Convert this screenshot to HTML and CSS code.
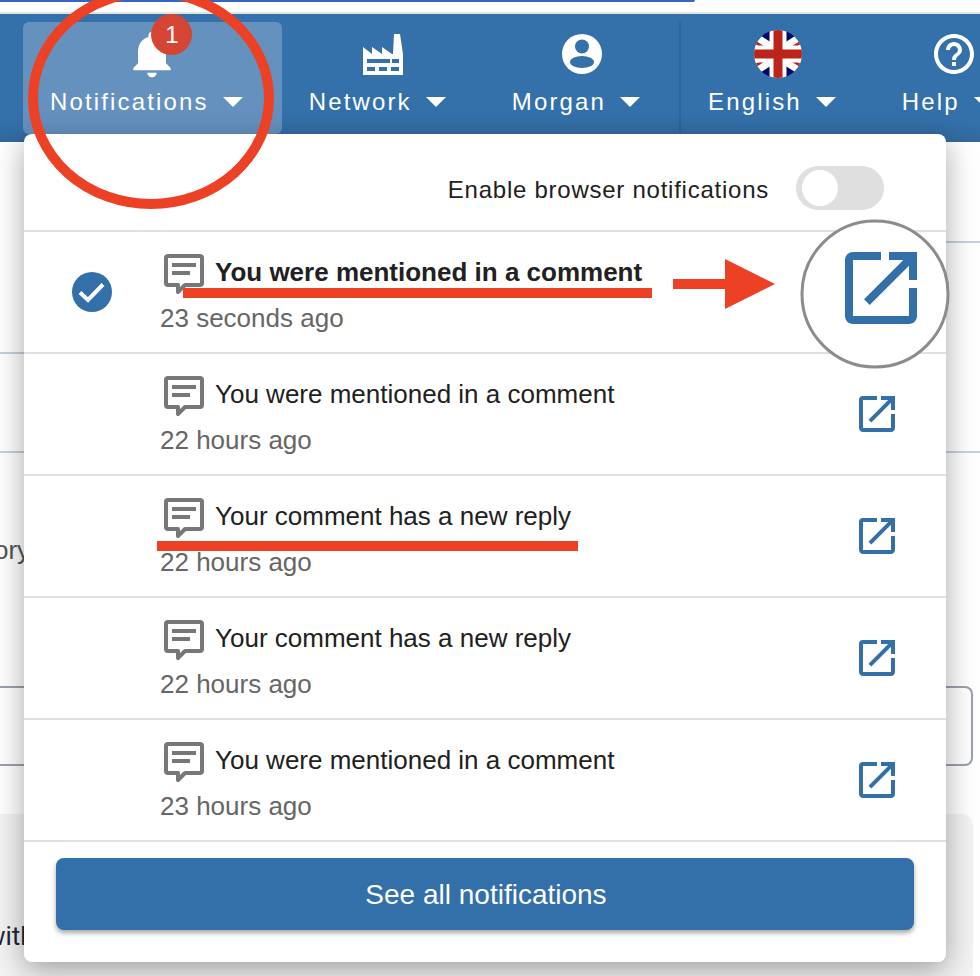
FILE: index.html
```html
<!DOCTYPE html>
<html lang="en">
<head>
    <meta charset="UTF-8">
    <meta name="viewport" content="width=device-width, initial-scale=1.0">
    <title>Notifications</title>
    <link rel="stylesheet" href="styles.css">
</head>
<body>
    <div class="top-strip"></div>

    <nav class="navbar">
        <div class="nav-item active">
            <span class="nav-icon">
                <svg width="56" height="56" viewBox="0 0 24 24"><path fill="#fff" d="M12 22c1.100 0 2-.9 2-2h-4c0 1.100.89 2 2 2zm6-6v-5c0-3.070-1.640-5.640-4.500-6.320V4c0-.83-.67-1.500-1.500-1.500s-1.500.67-1.500 1.500v.68C7.630 5.360 6 7.920 6 11v5l-2 2v1h16v-1l-2-2z"/></svg>
                <span class="badge">1</span>
            </span>
            <span class="nav-label">Notifications<i class="caret"></i></span>
        </div>
        <div class="nav-item">
            <span class="nav-icon">
                <svg width="40" height="41" viewBox="0 0 40 41"><path fill="#fff" fill-rule="evenodd" d="M0 13L9 20V13L19 20V13L29 20H30L31 0H37L40 20V41H0zM4 25V29H27V25zM29 25V29H36V25zM4 33V37H12V33zM16 33V37H24V33zM28 33V37H36V33z"/></svg>
            </span>
            <span class="nav-label">Network<i class="caret"></i></span>
        </div>
        <div class="nav-item">
            <span class="nav-icon">
                <svg width="48" height="48" viewBox="0 0 48 48">
                    <circle cx="24" cy="24" r="20" fill="#fff"/>
                    <circle cx="24" cy="16.500" r="7" fill="#3470aa"/>
                    <ellipse cx="24" cy="32" rx="12" ry="6" fill="#3470aa"/>
                </svg>
            </span>
            <span class="nav-label">Morgan<i class="caret"></i></span>
        </div>
        <div class="nav-divider"></div>
        <div class="nav-item">
            <span class="nav-icon">
                <svg width="48" height="48" viewBox="0 0 48 48">
                    <clipPath id="flag-clip"><circle cx="24" cy="24" r="24"/></clipPath>
                    <g clip-path="url(#flag-clip)">
                        <rect width="48" height="48" fill="#00096b"/>
                        <path d="M-4 6L52 42M-4 42L52 6" stroke="#fff" stroke-width="12"/>
                        <path d="M-4 9L20 24M52 39L28 24M-4 39L20 24M52 9L28 24" stroke="#bd2419" stroke-width="3"/>
                        <path d="M24 0V48M0 24H48" stroke="#fff" stroke-width="17"/>
                        <path d="M24 0V48M0 24H48" stroke="#bd2419" stroke-width="9"/>
                    </g>
                </svg>
            </span>
            <span class="nav-label">English<i class="caret"></i></span>
        </div>
        <div class="nav-item">
            <span class="nav-icon">
                <svg width="48" height="48" viewBox="0 0 24 24"><path fill="#fff" d="M11 18h2v-2h-2v2zm1-16C6.480 2 2 6.480 2 12s4.480 10 10 10 10-4.480 10-10S17.520 2 12 2zm0 18c-4.410 0-8-3.590-8-8s3.590-8 8-8 8 3.590 8 8-3.590 8-8 8zm0-14c-2.210 0-4 1.790-4 4h2c0-1.100.9-2 2-2s2 .9 2 2c0 2-3 1.750-3 5h2c0-2.250 3-2.500 3-5 0-2.210-1.790-4-4-4z"/></svg>
            </span>
            <span class="nav-label">Help<i class="caret"></i></span>
        </div>
    </nav>

    <!-- page behind the menu -->
    <main class="page">
        <div class="columns">
            <div class="col">
                <div class="block block-a"></div>
                <div class="block block-b"></div>
            </div>
            <div class="col">
                <div class="block block-c"></div>
                <div class="block block-d"></div>
            </div>
        </div>
        <p class="label-cut">ory</p>
        <div class="input-box"></div>
        <div class="info-panel"><p class="info-text">with</p></div>
    </main>

    <div class="menu">
        <div class="menu-head">
            <span class="switch-label">Enable browser notifications</span>
            <span class="switch"><span class="switch-knob"></span></span>
        </div>

        <div class="note unread">
            <span class="note-state">
                <svg width="40" height="40" viewBox="0 0 40 40"><circle cx="20" cy="20" r="20" fill="#336fa8"/><path d="M8 20.500l8 7.500L31 12.500" fill="none" stroke="#fff" stroke-width="4"/></svg>
            </span>
            <div class="note-body">
                <div class="note-title">
                    <svg class="chat" width="48" height="48" viewBox="0 0 48 48"><path class="chat-line" d="M8 6H40a2 2 0 0 1 2 2V33a2 2 0 0 1-2 2H25L18 42V35H8a2 2 0 0 1-2-2V8a2 2 0 0 1 2-2zM12 15H36M12 23H30"/></svg>
                    <span class="title-text">You were mentioned in a comment</span>
                </div>
                <div class="note-time">23 seconds ago</div>
            </div>
        </div>

        <div class="note">
            <span class="note-state"></span>
            <div class="note-body">
                <div class="note-title">
                    <svg class="chat" width="48" height="48" viewBox="0 0 48 48"><path class="chat-line" d="M8 6H40a2 2 0 0 1 2 2V33a2 2 0 0 1-2 2H25L18 42V35H8a2 2 0 0 1-2-2V8a2 2 0 0 1 2-2zM12 15H36M12 23H30"/></svg>
                    <span class="title-text">You were mentioned in a comment</span>
                </div>
                <div class="note-time">22 hours ago</div>
            </div>
            <svg class="open-link" width="48" height="48" viewBox="0 0 24 24"><path d="M19 19H5V5h7V3H5a2 2 0 0 0-2 2v14c0 1.100.9 2 2 2h14c1.100 0 2-.9 2-2v-7h-2v7zM14 3v2h3.590l-9.830 9.830 1.410 1.410L19 6.410V10h2V3h-7z"/></svg>
        </div>

        <div class="note">
            <span class="note-state"></span>
            <div class="note-body">
                <div class="note-title">
                    <svg class="chat" width="48" height="48" viewBox="0 0 48 48"><path class="chat-line" d="M8 6H40a2 2 0 0 1 2 2V33a2 2 0 0 1-2 2H25L18 42V35H8a2 2 0 0 1-2-2V8a2 2 0 0 1 2-2zM12 15H36M12 23H30"/></svg>
                    <span class="title-text">Your comment has a new reply</span>
                </div>
                <div class="note-time">22 hours ago</div>
            </div>
            <svg class="open-link" width="48" height="48" viewBox="0 0 24 24"><path d="M19 19H5V5h7V3H5a2 2 0 0 0-2 2v14c0 1.100.9 2 2 2h14c1.100 0 2-.9 2-2v-7h-2v7zM14 3v2h3.590l-9.830 9.830 1.410 1.410L19 6.410V10h2V3h-7z"/></svg>
        </div>

        <div class="note">
            <span class="note-state"></span>
            <div class="note-body">
                <div class="note-title">
                    <svg class="chat" width="48" height="48" viewBox="0 0 48 48"><path class="chat-line" d="M8 6H40a2 2 0 0 1 2 2V33a2 2 0 0 1-2 2H25L18 42V35H8a2 2 0 0 1-2-2V8a2 2 0 0 1 2-2zM12 15H36M12 23H30"/></svg>
                    <span class="title-text">Your comment has a new reply</span>
                </div>
                <div class="note-time">22 hours ago</div>
            </div>
            <svg class="open-link" width="48" height="48" viewBox="0 0 24 24"><path d="M19 19H5V5h7V3H5a2 2 0 0 0-2 2v14c0 1.100.9 2 2 2h14c1.100 0 2-.9 2-2v-7h-2v7zM14 3v2h3.590l-9.830 9.830 1.410 1.410L19 6.410V10h2V3h-7z"/></svg>
        </div>

        <div class="note">
            <span class="note-state"></span>
            <div class="note-body">
                <div class="note-title">
                    <svg class="chat" width="48" height="48" viewBox="0 0 48 48"><path class="chat-line" d="M8 6H40a2 2 0 0 1 2 2V33a2 2 0 0 1-2 2H25L18 42V35H8a2 2 0 0 1-2-2V8a2 2 0 0 1 2-2zM12 15H36M12 23H30"/></svg>
                    <span class="title-text">You were mentioned in a comment</span>
                </div>
                <div class="note-time">23 hours ago</div>
            </div>
            <svg class="open-link" width="48" height="48" viewBox="0 0 24 24"><path d="M19 19H5V5h7V3H5a2 2 0 0 0-2 2v14c0 1.100.9 2 2 2h14c1.100 0 2-.9 2-2v-7h-2v7zM14 3v2h3.590l-9.830 9.830 1.410 1.410L19 6.410V10h2V3h-7z"/></svg>
        </div>

        <div class="menu-foot">
            <button class="see-all">See all notifications</button>
        </div>
    </div>

    <!-- red marks and the magnifier drawn over the screenshot -->
    <svg class="marks" width="980" height="976" viewBox="0 0 980 976">
        <ellipse cx="151" cy="98" rx="118" ry="106" fill="none" stroke="#ec4124" stroke-width="10"/>
        <rect x="183" y="288" width="469" height="10" fill="#ec4124"/>
        <rect x="157" y="541" width="421" height="10" fill="#ec4124"/>
        <path d="M673 279H725V259L775 284L725 309V289H673z" fill="#ec4124"/>
        <circle cx="875" cy="294" r="73" fill="#fff" stroke="#8c8c8c" stroke-width="3"/>
        <svg x="833" y="240" width="96" height="96" viewBox="0 0 24 24"><path fill="#336fa8" d="M19 19H5V5h7V3H5a2 2 0 0 0-2 2v14c0 1.100.9 2 2 2h14c1.100 0 2-.9 2-2v-7h-2v7zM14 3v2h3.590l-9.830 9.830 1.410 1.410L19 6.410V10h2V3h-7z"/></svg>
    </svg>
</body>
</html>
```

FILE: styles.css
```css
* {
    box-sizing: border-box;
}
html, body {
    height: 100%;
}
body {
    margin: 0;
    position: relative;
    overflow: hidden;
    background-color: #fff;
    font-family: "Liberation Sans", Arial, sans-serif;
    color: #212121;
}
.top-strip {
    height: 14px;
    border-bottom: 2px solid #e4e4de;
}
.top-strip::before {
    content: "";
    display: block;
    width: 695px;
    height: 2px;
    border-radius: 0 0 6px 0;
    background-color: #3366c4;
}

/* navbar */
.navbar {
    display: flex;
    height: 128px;
    padding: 8px 0 8px 23px;
    overflow: hidden;
    background: linear-gradient(#3470aa 85%, #32699f);
    color: #fff;
}
.nav-item {
    flex: none;
    display: flex;
    flex-direction: column;
    align-items: center;
    height: 112px;
    padding: 0 39px 0 27px;
    border-radius: 6px;
}
.nav-item.active {
    background-color: #6591bf;
}
.nav-icon {
    position: relative;
    display: flex;
    align-items: center;
    justify-content: center;
    width: 56px;
    height: 64px;
    margin-left: 12px;
}
.badge {
    position: absolute;
    top: -8px;
    left: 27px;
    width: 41px;
    height: 41px;
    border-radius: 50%;
    background-color: #d64533;
    font-size: 24px;
    line-height: 41px;
    text-align: center;
}
.nav-label {
    display: flex;
    align-items: center;
    gap: 14px;
    font-size: 24px;
    line-height: 32px;
    letter-spacing: 2.15px;
    white-space: nowrap;
}
.caret {
    width: 0;
    height: 0;
    border-left: 10px solid transparent;
    border-right: 10px solid transparent;
    border-top: 10px solid #fff;
}
.nav-divider {
    flex: none;
    width: 2px;
    height: 112px;
    background-color: #2f639a;
}

/* what is behind the menu */
.page {
    height: 834px;
}
.columns {
    display: flex;
}
.col {
    width: 50%;
}
.block {
    border-bottom: 2px solid #c6d0e0;
}
.block-a {
    height: 212px;
}
.block-b {
    height: 99px;
}
.block-c {
    height: 101px;
}
.block-d {
    height: 210px;
}
.label-cut {
    margin: 82px 0 0 -6px;
    color: #555;
    font-size: 26px;
    line-height: 30px;
}
.input-box {
    height: 80px;
    width: 973px;
    margin-top: 121px;
    border: 2px solid #9aa1ae;
    border-left: none;
    border-radius: 0 8px 8px 0;
}
.info-panel {
    width: 973px;
    height: 170px;
    margin-top: 48px;
    padding-top: 107px;
    background-color: #f3f3f3;
    border-radius: 0 12px 0 0;
}
.info-text {
    margin: 0 0 0 -14px;
    color: #1c2738;
    font-family: Roboto, sans-serif;
    font-size: 26px;
    line-height: 30px;
}

/* notifications menu */
.menu {
    position: absolute;
    top: 134px;
    left: 24px;
    width: 922px;
    height: 828px;
    border-radius: 8px;
    background-color: #fff;
    box-shadow: 0 8px 30px rgba(0,0,0,0.35);
}
.menu-head {
    display: flex;
    align-items: center;
    justify-content: flex-end;
    height: 98px;
    padding: 12px 62px 0 0;
    border-bottom: 2px solid #e0e0e0;
}
.switch-label {
    margin: 4px 27px 0 0;
    font-size: 24px;
    letter-spacing: 0.75px;
}
.switch {
    display: flex;
    align-items: center;
    width: 88px;
    height: 44px;
    padding-left: 6px;
    border-radius: 22px;
    background-color: #dfdfdf;
}
.switch-knob {
    width: 36px;
    height: 36px;
    border-radius: 50%;
    background-color: #fff;
}
.note {
    display: flex;
    align-items: flex-start;
    height: 122px;
    padding-top: 18px;
    border-bottom: 2px solid #e0e0e0;
}
.note-state {
    flex: none;
    display: flex;
    width: 136px;
    margin-top: 22px;
    padding-left: 48px;
}
.note-body {
    flex: 1;
}
.note-title {
    display: flex;
    align-items: center;
    gap: 7px;
    height: 48px;
    font-size: 26px;
}
.title-text {
    margin-top: -4px;
}
.unread .note-title {
    font-weight: bold;
}
.note-time {
    color: #666;
    font-size: 26px;
    line-height: 40px;
}
.chat {
    flex: none;
}
.chat-line {
    fill: none;
    stroke: #777;
    stroke-width: 4;
    stroke-linejoin: round;
}
.open-link {
    flex: none;
    margin: 18px 45px 0 0;
    fill: #336fa8;
}
.menu-foot {
    padding: 16px 32px;
}
.see-all {
    display: block;
    width: 100%;
    height: 72px;
    padding: 2px 0 0 2px;
    border: none;
    border-radius: 8px;
    background-color: #336fa8;
    box-shadow: 0 3px 5px rgba(0,0,0,0.35);
    color: #fff;
    font-family: inherit;
    font-size: 28px;
}

.marks {
    position: absolute;
    top: 0;
    left: 0;
}
```
